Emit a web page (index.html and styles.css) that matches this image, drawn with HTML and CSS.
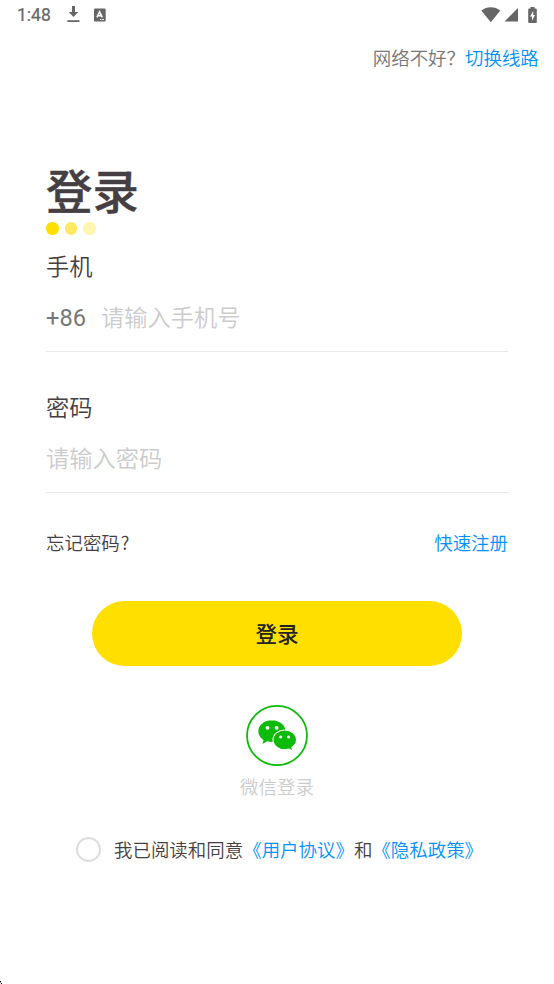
FILE: index.html
```html
<!DOCTYPE html>
<html lang="zh-CN">
<head>
<meta charset="utf-8">
<title>登录</title>
<link rel="stylesheet" href="styles.css">
</head>
<body>
<header class="status">
  <span class="time">1:48</span>
  <svg class="download" width="14" height="18" viewBox="0 0 14 18"><path d="M5 1h3v6h3.300L6.500 12 1.700 7H5zM.3 15.300h12.200V17H.3z"/></svg>
  <svg class="app" width="12" height="14" viewBox="0 0 12 14"><rect y=".5" width="11.700" height="13" rx="1.300"/><path d="M2.900 9.300 5.600 3.800 8.300 9.300M4 7.800h3.200" fill="none" stroke="#fff" stroke-width="1.500"/><path d="M6 11.500h1.300M8.200 11.500h1.700" stroke="#fff"/></svg>
  <span class="spacer"></span>
  <svg class="wifi" width="20" height="16" viewBox="0 0 20 16"><path d="M.3 3.600Q4.400.2 9.800.2t9.500 3.400L9.800 15.200z"/></svg>
  <svg class="signal" width="15" height="14" viewBox="0 0 15 14"><path d="M14 0v13.500H.5z"/></svg>
  <svg class="battery" width="9" height="17" viewBox="0 0 9 17"><path d="M2.500 0h4v1.600h1.300q1 0 1 1V15q0 1-1 1H1.200q-1 0-1-1V2.600q0-1 1-1h1.300z"/><path d="M5.200 4 2 9.500h2v4.200L7 8H5.200z" fill="#fff"/></svg>
</header>
<div class="network">网络不好？<a>切换线路</a></div>
<main class="form">
  <h1>登录</h1>
  <div class="dots"><i></i><i></i><i></i></div>
  <label class="label">手机</label>
  <div class="field"><span class="code">+86</span><span>请输入手机号</span></div>
  <label class="label second">密码</label>
  <div class="field"><span>请输入密码</span></div>
  <div class="links"><span>忘记密码<span class="mark">?</span></span><a>快速注册</a></div>
</main>
<button class="submit">登录</button>
<div class="wechat">
  <svg width="62" height="61" viewBox="0 0 62 61">
    <ellipse cx="31" cy="30.500" rx="30" ry="29.600" fill="none" stroke="#0dbb0b" stroke-width="1.800"/>
    <g fill="#0dbb0b">
      <path d="M26 15.200c-7.600 0-13.700 4.900-13.700 11 0 3.600 2 6.700 5.200 8.700l-1 4 4.600-2.600q2.400.8 4.900.8c7.500 0 13.600-4.900 13.600-10.900s-6.100-11-13.600-11z"/>
      <path d="M38.700 25c-6.500 0-11.700 4.200-11.700 9.800s5.200 9.900 11.700 9.900q2.100 0 4.100-.7l4 2.100-.9-3.700c2.800-1.900 4.600-4.600 4.600-7.600 0-5.600-5.300-9.800-11.800-9.800z" stroke="#fff" stroke-width="1.100"/>
    </g>
    <g fill="#fff"><circle cx="21.500" cy="22.800" r="1.900"/><circle cx="30.600" cy="22.800" r="1.900"/><circle cx="34.600" cy="31.900" r="1.500"/><circle cx="42.500" cy="31.900" r="1.500"/></g>
  </svg>
  <span>微信登录</span>
</div>
<div class="agree"><i class="radio"></i><span>我已阅读和同意<a>《用户协议》</a>和<a>《隐私政策》</a></span></div>
<svg class="corner" width="3" height="3" viewBox="0 0 3 3"><path d="M0 0h1v1H0zM1 2h1v1H1z"/><path d="M0 1h1v1H0z" fill="#777"/></svg>
</body>
</html>
```

FILE: styles.css
```css
* { box-sizing: border-box; }
body {
  margin: 0;
  height: 984px;
  display: flex;
  flex-direction: column;
  overflow: hidden;
  background: #fff;
  color: #453e42;
  font-family: "Noto Sans CJK SC", sans-serif;
  font-size: 18.470px;
  font-weight: 350;
}
a { color: #0091ff; }
svg { display: block; flex: none; }
.status {
  display: flex;
  align-items: center;
  height: 30px;
  padding: 0 17px;
  fill: #666;
}
.time {
  width: 50px;
  color: #666;
  font: 400 17.500px/32px Roboto, sans-serif;
  -webkit-text-stroke: .2px #666;
}
.download { margin-top: -2px; }
.app { margin-left: 13px; }
.spacer { flex: 1; }
.signal { margin-left: 3px; }
.battery { margin-left: 9px; }
.network {
  height: 30px;
  margin-top: 12px;
  padding-right: 15.200px;
  line-height: 30px;
  text-align: right;
  color: #777;
}
.form { margin: 86px 46px 0; }
h1 {
  margin: 0;
  height: 64px;
  font-size: 46.400px;
  font-weight: 500;
  line-height: 62px;
  -webkit-text-stroke: .4px #453e42;
}
.dots { display: flex; gap: 6px; height: 13px; }
.dots i { width: 12.500px; height: 12.500px; border-radius: 50%; background: #ffdf00; }
.dots i:nth-child(2) { background: #ffe95f; }
.dots i:nth-child(3) { background: #fff5af; }
.label {
  display: block;
  height: 34px;
  margin-top: 15px;
  font-size: 23.250px;
  line-height: 31px;
}
.second { margin-top: 39px; }
.field {
  display: flex;
  height: 68px;
  border-bottom: 1px solid #e8e8e8;
  color: #ccc;
  font-size: 23.250px;
  line-height: 65px;
}
.code {
  width: 55px;
  color: #777;
  font-family: Roboto, sans-serif;
  font-size: 23.600px;
  font-weight: 400;
  line-height: 69px;
}
.links { display: flex; justify-content: space-between; margin-top: 34px; line-height: 30px; }
.mark { margin-left: 1px; }
.submit {
  align-self: center;
  flex: none;
  width: 370px;
  height: 65px;
  margin-top: 44px;
  padding: 0 0 2px;
  border: 0;
  border-radius: 33px;
  background: #ffdf00;
  color: #222;
  font: 500 21.600px/63px "Noto Sans CJK SC", sans-serif;
}
.wechat {
  display: flex;
  flex-direction: column;
  align-items: center;
  margin-top: 39px;
  color: #ccc;
  line-height: 30px;
}
.wechat span { margin-top: 5px; }
.agree { display: flex; align-items: center; height: 30px; margin: 33px 0 0 76px; line-height: 30px; }
.radio { width: 25px; height: 25px; margin-right: 13px; border: 2px solid #ddd; border-radius: 50%; }
.corner { margin-top: auto; }
```
